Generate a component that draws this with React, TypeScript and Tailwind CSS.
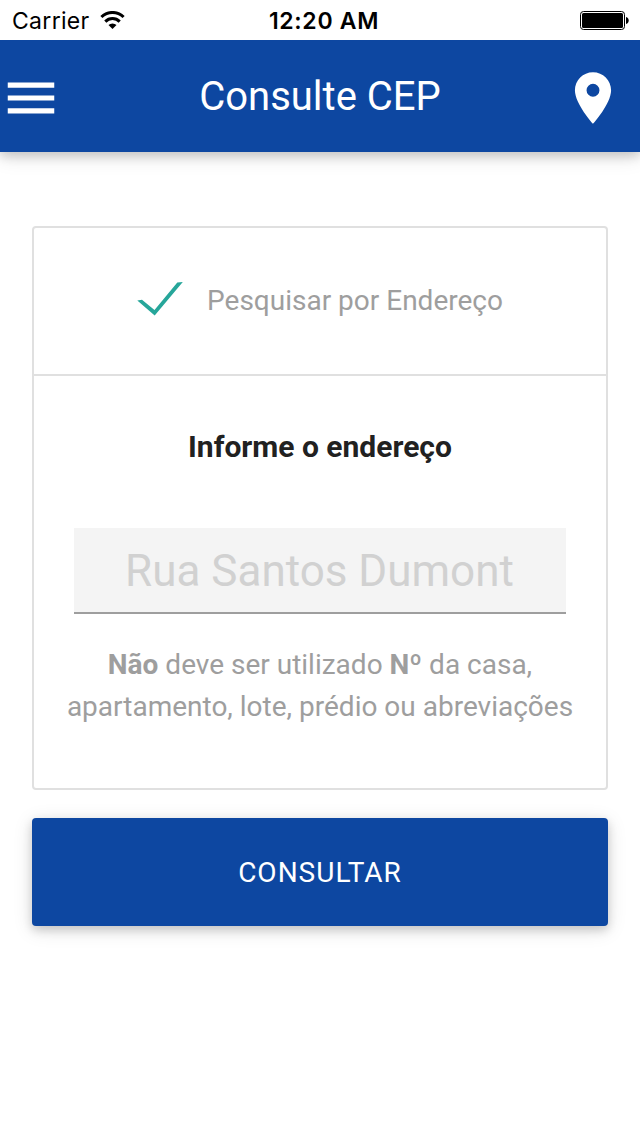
import { MdMenu, MdLocationOn } from 'react-icons/md';

function StatusBar() {
  return (
    <div className="relative grid h-10 grid-cols-3 items-center bg-white pr-[11px] pl-3 font-['Inter',sans-serif] text-[23px] text-black">
      <div className="flex items-center gap-2.5 pt-0.5">
        <span className="tracking-[0.3px]">Carrier</span>
        <svg className="mb-[3px] h-[18px] w-[25px]" viewBox="0 0 25 18">
          <path d="M1.4 6a15.8 15.8 0 0 1 22.2 0" fill="none" stroke="currentColor" strokeWidth="3" />
          <path d="M5.3 10.6a10.2 10.2 0 0 1 14.4 0" fill="none" stroke="currentColor" strokeWidth="3" />
          <path d="M12.5 18l-4-4a5.8 5.8 0 0 1 8 0z" fill="currentColor" />
        </svg>
      </div>
      <span className="pt-0.5 pl-[7px] text-center font-semibold tracking-[0.7px] whitespace-nowrap">12:20 AM</span>
      <svg className="mt-0.5 h-5 w-[49px] justify-self-end" viewBox="0 0 49 20">
        <rect x="0.5" y="0.5" width="44" height="18" rx="3" fill="none" stroke="currentColor" />
        <rect x="2" y="2" width="41" height="15" rx="1.5" fill="currentColor" />
        <path d="M46 6c3.6 0.6 3.6 6.4 0 7z" fill="currentColor" />
      </svg>
    </div>
  );
}

export default function App() {
  return (
    <div className="min-h-screen bg-white font-['Roboto',sans-serif]">
      <header className="bg-[#0d47a1] text-white shadow-[0_4px_10px_rgba(0,0,0,0.16),0_4px_20px_rgba(0,0,0,0.12)]">
        <StatusBar />
        <div className="grid h-28 grid-cols-[1fr_auto_1fr] items-center">
          <MdMenu className="mt-1 size-[62px]" />
          <h1 className="pt-0.5 text-[40px]">Consulte CEP</h1>
          <MdLocationOn className="mt-1 mr-4 size-[62px] justify-self-end" />
        </div>
      </header>

      <main className="px-8 pt-[74px]">
        <div className="h-[564px] rounded border-2 border-[#e0e0e0] text-center">
          <div className="flex h-[148px] items-center justify-center gap-6 border-b-2 border-[#e0e0e0] text-[28px] text-[#9e9e9e]">
            <svg className="mb-1 h-[34px] w-[46px]" viewBox="0 0 46 34" fill="#26a69a">
              <path d="M0.3 18.4 5 17.8 17.5 28 40.3 0.5 45.8 0 17.7 33.5z" />
            </svg>
            <span className="-mt-px">Pesquisar por Endereço</span>
          </div>

          <div className="px-10 pt-[50px]">
            <h2 className="text-[30px] leading-[42px] font-bold text-[#212121]">Informe o endereço</h2>
            <input
              type="text"
              placeholder="Rua Santos Dumont"
              className="mt-[60px] block h-[86px] w-full border-b-2 border-[#9e9e9e] bg-[#f4f4f4] pt-0.5 pr-px text-center text-[44px] outline-none placeholder:text-[#d1d1d1]"
            />
          </div>
          <p className="mt-[30px] text-[28px] leading-[42px] text-[#9e9e9e]">
            <b>Não</b> deve ser utilizado <b>Nº</b> da casa,
            <br />
            apartamento, lote, prédio ou abreviações
          </p>
        </div>

        <button className="mt-7 h-[108px] w-full rounded bg-[#0d47a1] pt-0.5 text-[28px] tracking-[1px] text-white uppercase shadow-[0_4px_10px_rgba(0,0,0,0.16),0_4px_20px_rgba(0,0,0,0.12)]">
          Consultar
        </button>
      </main>
    </div>
  );
}
